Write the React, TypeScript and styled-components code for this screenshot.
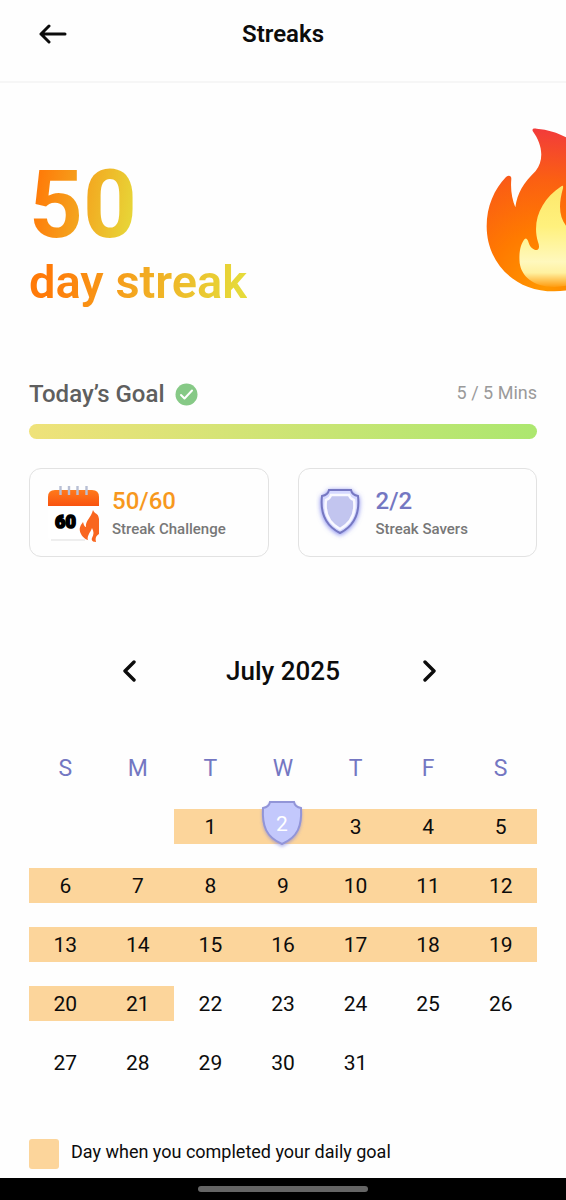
import React from "react";
import styled, { createGlobalStyle } from "styled-components";

const GlobalStyle = createGlobalStyle`
  * { box-sizing: border-box; }
  body {
    margin: 0;
    background: #fefefe;
    color: #0c0c0c;
    font-family: Roboto, "Liberation Sans", sans-serif;
  }
`;

const Screen = styled.div`
  min-height: 100vh;
  display: flex;
  flex-direction: column;
  overflow: hidden;
`;

const Header = styled.header`
  display: grid;
  grid-template-columns: 48px 1fr 48px;
  align-items: start;
  height: 83px;
  padding: 10px 29px 0;
  border-bottom: 2px solid #f6f6f6;
`;

const IconButton = styled.button`
  display: flex;
  align-items: center;
  justify-content: center;
  width: 48px;
  height: 48px;
  padding: 0;
  border: 0;
  background: none;
  color: inherit;
  cursor: pointer;
`;

const Title = styled.h1`
  margin: 0;
  font-size: 24px;
  font-weight: 600;
  line-height: 48px;
  text-align: center;
`;

const Main = styled.main`
  padding: 0 29px;
  flex: 1;
`;

const Hero = styled.section`
  display: flex;
  justify-content: space-between;
  align-items: flex-start;
  margin-right: -91px;
  padding-top: 45px;
  height: 292px;
`;

const StreakText = styled.div`
  display: flex;
  flex-direction: column;
  align-items: flex-start;
  padding-top: 28px;
`;

const GradientText = styled.span<{ $size: number; $line: number; $weight: number }>`
  font-size: ${(p) => p.$size}px;
  line-height: ${(p) => p.$line}px;
  font-weight: ${(p) => p.$weight};
  color: transparent;
  background: linear-gradient(100deg, #ff7a08 10%, #e6da3a 95%);
  background-clip: text;
  -webkit-background-clip: text;
`;

const GoalHead = styled.div`
  display: flex;
  align-items: center;
  justify-content: space-between;
  height: 38px;
`;

const GoalTitle = styled.h2`
  display: flex;
  align-items: center;
  gap: 10px;
  margin: 0;
  font-size: 24px;
  font-weight: 500;
  color: #5f5f5f;
`;

const GoalAmount = styled.span`
  padding-bottom: 4px;
  font-size: 18px;
  color: #9a9a9a;
`;

const Progress = styled.div`
  height: 15px;
  margin-top: 11px;
  border-radius: 8px;
  background: linear-gradient(90deg, #efe27a, #ace76f);
`;

const Cards = styled.div`
  display: grid;
  grid-template-columns: 1fr 1fr;
  gap: 29px;
  margin-top: 29px;
`;

const Card = styled.section`
  display: flex;
  align-items: center;
  height: 89px;
  padding: 0 17px;
  border: 1px solid #e2e2e2;
  border-radius: 12px;
`;

const CardArt = styled.div<{ $width: number }>`
  display: flex;
  flex: none;
  width: ${(p) => p.$width}px;
`;

const CardValue = styled.div<{ $color: string }>`
  font-size: 24px;
  line-height: 32px;
  font-weight: 500;
  color: ${(p) => p.$color};
`;

const CardLabel = styled.div`
  font-size: 15px;
  line-height: 24px;
  font-weight: 500;
  color: #777;
`;

const MonthBar = styled.div`
  display: flex;
  align-items: center;
  justify-content: space-between;
  width: 348px;
  margin: 90px auto 0;
`;

const Month = styled.h2`
  margin: 0;
  font-size: 26px;
  line-height: 48px;
  font-weight: 500;
`;

const Calendar = styled.table`
  width: 100%;
  table-layout: fixed;
  margin-top: 32px;
  border-collapse: separate;
  border-spacing: 0 24px;
`;

const Weekday = styled.th`
  height: 34px;
  padding: 0;
  font-size: 23px;
  font-weight: 400;
  color: #7477c2;
`;

const Day = styled.td<{ $done: boolean }>`
  height: 35px;
  padding: 0;
  font-size: 21px;
  line-height: 36px;
  text-align: center;
  background: ${(p) => (p.$done ? "#fcd59b" : "transparent")};
`;

const DayBox = styled.div`
  position: relative;
  height: 35px;
`;

const Badge = styled.div`
  position: absolute;
  top: -10px;
  left: 50%;
  width: 48px;
  margin-left: -25px;
  color: #fff;
  svg { position: absolute; inset: 0; }
`;

const BadgeNumber = styled.span`
  position: relative;
  display: block;
  line-height: 50px;
`;

const Legend = styled.div`
  display: flex;
  gap: 12px;
  margin: 35px 0 8px;
  font-size: 18px;
  line-height: 26px;
`;

const Swatch = styled.span`
  width: 30px;
  height: 30px;
  border-radius: 3px;
  background: #fcd59b;
`;

const NavBar = styled.footer`
  display: flex;
  justify-content: center;
  height: 22px;
  padding-top: 8px;
  background: #000;
`;

const NavPill = styled.div`
  width: 30%;
  height: 6px;
  border-radius: 3px;
  background: #656565;
`;

const OUTER_FLAME =
  "M200 64 C198 57 203 56 212 57 C250 60 282 72 310 88 C350 112 374 150 375 190 C390 210 398 192 404 184 C440 225 468 290 468 355 C468 465 385 545 265 545 C140 545 62 455 62 350 C62 290 85 238 120 202 C128 196 136 198 136 207 C133 240 138 268 148 293 C154 250 172 220 209 184 C235 150 230 105 200 64Z";
const INNER_FLAME =
  "M286 230 C291 226 292 230 291 236 C277 285 279 320 300 348 C330 385 370 410 370 455 C370 505 325 532 265 532 C200 532 166 498 161 460 C158 428 164 402 176 388 C182 382 186 392 188 399 C192 412 203 422 213 421 C221 419 220 407 216 397 C197 335 225 270 286 230Z";

function Flame() {
  return (
    <svg width="142" height="164" viewBox="60 55 426 492" aria-hidden="true">
      <defs>
        <radialGradient id="fire" gradientUnits="userSpaceOnUse" cx="240" cy="530" r="490">
          <stop offset="0" stopColor="#ff9800" />
          <stop offset=".35" stopColor="#ff7a00" />
          <stop offset=".65" stopColor="#fb6012" />
          <stop offset="1" stopColor="#f1373f" />
        </radialGradient>
        <linearGradient id="core" x1="0" y1="0" x2="0" y2="1">
          <stop offset="0" stopColor="#fde76b" />
          <stop offset=".4" stopColor="#fff17d" />
          <stop offset=".75" stopColor="#fff8bd" />
          <stop offset=".86" stopColor="#fff1a0" />
          <stop offset="1" stopColor="#ff9c10" />
        </linearGradient>
      </defs>
      <path d={OUTER_FLAME} fill="url(#fire)" />
      <path d={INNER_FLAME} fill="url(#core)" />
    </svg>
  );
}

function CalendarArt() {
  return (
    <svg width="54" height="58" viewBox="0 0 54 58" aria-hidden="true">
      <defs>
        <linearGradient id="cover" x1="0" y1="0" x2="0" y2="1">
          <stop offset="0" stopColor="#ff7a1c" />
          <stop offset="1" stopColor="#f9530f" />
        </linearGradient>
      </defs>
      <path d="M1 21H52V52Q52 56 48 56H5Q1 56 1 52Z" fill="#fff" />
      <path d="M4 56H38" stroke="#ddd" />
      <path d="M1 22V13Q1 6 8 6H45Q52 6 52 13V22Z" fill="url(#cover)" />
      <path d="M13.500 2V11M22 2V11M30.500 2V11M39.500 2V11" stroke="#b8bfd4" strokeWidth="2.400" />
      <text x="8" y="44" fontSize="18" fontWeight="900" stroke="#000" strokeWidth="1.600">60</text>
      <path d="M46 26C48 31 51 28 52 35V50C49 52 48 54 49 58C40 57 36 54 34 50C31 44 34 41 36 38C37 42 38 43 39 43C38 37 44 34 46 26Z" fill="#f9661f" />
      <path d="M42 58C38 53 44 48 45 44C47 48 47 50 45 54C44 56 46 57 46 58Z" fill="#fff" />
    </svg>
  );
}

function ShieldArt() {
  return (
    <svg width="50" height="60" viewBox="1 0 50 60" aria-hidden="true">
      <defs>
        <filter id="glow" x="-30%" y="-30%" width="160%" height="160%">
          <feDropShadow dx="0" dy="1" stdDeviation="2.500" floodColor="#5d63e8" floodOpacity=".8" />
        </filter>
      </defs>
      <path
        d="M14 7H36Q37 12 43 13C45 31 39 43 25 50C11 43 5 31 7 13Q13 12 14 7Z"
        fill="#d5d8ff" stroke="#7678c2" strokeWidth="2" filter="url(#glow)"
      />
      <path
        d="M16 12H34Q35 16 39 17C41 31 36 40 25 46C14 40 9 31 11 17Q15 16 16 12Z"
        fill="#c2c5ef" stroke="#f9f9ff" strokeWidth="2.500"
      />
    </svg>
  );
}

function SaverShield() {
  return (
    <svg width="48" height="52" viewBox="0 0 48 52" aria-hidden="true">
      <defs>
        <filter id="lift" x="-30%" y="-30%" width="160%" height="160%">
          <feDropShadow dx="0" dy="2" stdDeviation="1.500" floodColor="#6f75e0" floodOpacity=".45" />
        </filter>
      </defs>
      <path
        d="M12 3H36Q37 8 43 9C44 27 40 38 24 45C8 38 4 27 5 9Q11 8 12 3Z"
        fill="#c3c8fc" stroke="#9295d8" strokeWidth="2" filter="url(#lift)"
      />
    </svg>
  );
}

function Chevron({ d }: { d: string }) {
  return (
    <svg width="20" height="22" viewBox="0 0 20 22" fill="none" stroke="currentColor" strokeWidth="3.400" strokeLinecap="round" strokeLinejoin="round" aria-hidden="true">
      <path d={d} />
    </svg>
  );
}

const WEEKDAYS = ["S", "M", "T", "W", "T", "F", "S"];
const FIRST_COLUMN = 2;
const DAYS_IN_MONTH = 31;
const LAST_DONE = 21;
const SAVED = 2;

const weeks = Array.from({ length: 5 }, (_, w) =>
  Array.from({ length: 7 }, (_, d) => {
    const day = w * 7 + d - FIRST_COLUMN + 1;
    return day >= 1 && day <= DAYS_IN_MONTH ? day : null;
  })
);

export default function App() {
  return (
    <Screen>
      <GlobalStyle />
      <Header>
        <IconButton aria-label="Back">
          <svg width="28" height="20" viewBox="0 0 28 20" fill="none" stroke="currentColor" strokeWidth="3" strokeLinecap="round" strokeLinejoin="round">
            <path d="M26 10H2M10 2L2 10L10 18" />
          </svg>
        </IconButton>
        <Title>Streaks</Title>
      </Header>
      <Main>
        <Hero>
          <StreakText>
            <GradientText $size={94} $line={98} $weight={700}>50</GradientText>
            <GradientText $size={47} $line={56} $weight={600}>day streak</GradientText>
          </StreakText>
          <Flame />
        </Hero>
        <GoalHead>
          <GoalTitle>
            Today’s Goal
            <svg width="23" height="23" viewBox="0 0 23 23" fill="none" aria-hidden="true">
              <circle cx="11.500" cy="11.500" r="11" fill="#86c986" />
              <path d="M6 12L9.500 15.500L17 7.500" stroke="#fff" strokeWidth="2" strokeLinecap="round" strokeLinejoin="round" />
            </svg>
          </GoalTitle>
          <GoalAmount>5 / 5 Mins</GoalAmount>
        </GoalHead>
        <Progress role="progressbar" aria-label="Today’s Goal" aria-valuemin={0} aria-valuemax={5} aria-valuenow={5} />
        <Cards>
          <Card>
            <CardArt $width={65}><CalendarArt /></CardArt>
            <div>
              <CardValue $color="#f7981d">50/60</CardValue>
              <CardLabel>Streak Challenge</CardLabel>
            </div>
          </Card>
          <Card>
            <CardArt $width={60}><ShieldArt /></CardArt>
            <div>
              <CardValue $color="#7477c2">2/2</CardValue>
              <CardLabel>Streak Savers</CardLabel>
            </div>
          </Card>
        </Cards>
        <MonthBar>
          <IconButton aria-label="Previous month"><Chevron d="M11 2L2 11L11 20" /></IconButton>
          <Month>July 2025</Month>
          <IconButton aria-label="Next month"><Chevron d="M2 2L11 11L2 20" /></IconButton>
        </MonthBar>
        <Calendar>
          <thead>
            <tr>{WEEKDAYS.map((d, i) => <Weekday key={i} scope="col">{d}</Weekday>)}</tr>
          </thead>
          <tbody>
            {weeks.map((week, w) => (
              <tr key={w}>
                {week.map((day, d) => (
                  <Day key={d} $done={day !== null && day <= LAST_DONE}>
                    <DayBox>
                      {day === SAVED ? (
                        <Badge><SaverShield /><BadgeNumber>{day}</BadgeNumber></Badge>
                      ) : day}
                    </DayBox>
                  </Day>
                ))}
              </tr>
            ))}
          </tbody>
        </Calendar>
        <Legend><Swatch />Day when you completed your daily goal</Legend>
      </Main>
      <NavBar><NavPill /></NavBar>
    </Screen>
  );
}
